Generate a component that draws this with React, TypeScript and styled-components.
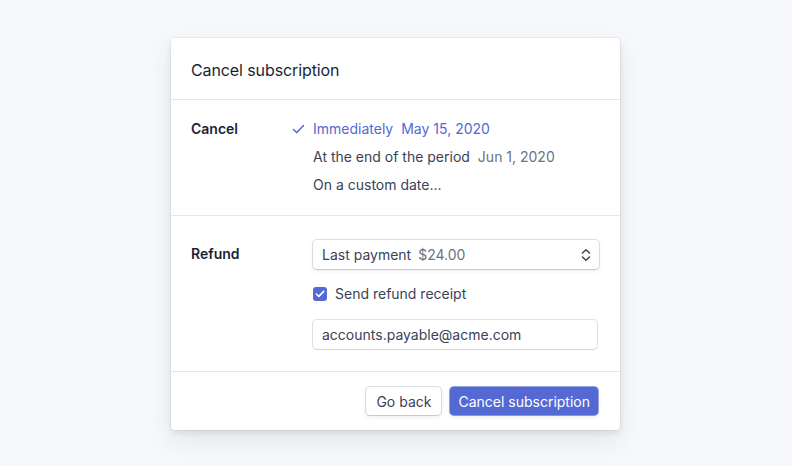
import * as React from "react";
import styled, { createGlobalStyle } from "styled-components";

const GlobalStyle = createGlobalStyle`
  html, body {
    margin: 0;
    padding: 0;
    background: #f6f8fb;
    font-family: Inter, "Noto Sans", "Liberation Sans", sans-serif;
    -webkit-font-smoothing: antialiased;
  }
`;

const Page = styled.div`
  width: 792px;
  height: 466px;
  display: flex;
  justify-content: center;
  padding-top: 38px;
  box-sizing: border-box;
`;

const Card = styled.div`
  width: 449px;
  height: 392px;
  margin-right: 1px;
  background: #fff;
  border-radius: 4px;
  box-shadow: 0 0 0 1px rgba(60, 66, 87, 0.05), 0 10px 24px 0 rgba(60, 66, 87, 0.1),
    0 3px 6px 0 rgba(0, 0, 0, 0.08);
  display: flex;
  flex-direction: column;
  overflow: hidden;
`;

const Header = styled.div`
  padding: 21px 20px 19px;
  height: 21px;
  line-height: 22px;
  font-size: 16px;
  letter-spacing: -0.1px;
  color: #1a1f36;
  border-bottom: 1px solid #e3e8ee;
`;

const Section = styled.div<{ $pad: string }>`
  display: grid;
  grid-template-columns: 122px 1fr;
  padding: ${(p) => p.$pad};
  border-bottom: 1px solid #e3e8ee;
`;

const Label = styled.div<{ $top?: number }>`
  font-size: 14px;
  font-weight: 600;
  color: #1a1f36;
  line-height: 20px;
  padding-top: ${(p) => p.$top ?? 0}px;
`;

const Options = styled.div`
  display: flex;
  flex-direction: column;
  gap: 8px;
`;

const Option = styled.div<{ $active?: boolean }>`
  position: relative;
  font-size: 14px;
  line-height: 20px;
  color: ${(p) => (p.$active ? "#5469d4" : "#3c4257")};
  display: flex;
  gap: 8px;
`;

const Sub = styled.span<{ $active?: boolean }>`
  color: ${(p) => (p.$active ? "#5469d4" : "#697386")};
`;

const CheckMark = styled.svg`
  position: absolute;
  left: -21px;
  top: 4px;
`;

const Fields = styled.div`
  display: flex;
  flex-direction: column;
`;

const Select = styled.div`
  height: 29px;
  box-sizing: border-box;
  border-radius: 4px;
  margin-right: 1px;
  box-shadow: 0 0 0 1px rgba(60, 66, 87, 0.16), 0 2px 5px 0 rgba(60, 66, 87, 0.08),
    0 1px 1px 0 rgba(0, 0, 0, 0.08);
  display: flex;
  align-items: center;
  padding: 0 8px 0 9px;
  font-size: 14px;
  color: #3c4257;
  gap: 7px;
`;

const Spacer = styled.div`
  flex: 1;
`;

const CheckRow = styled.label`
  display: flex;
  align-items: center;
  gap: 8px;
  margin-top: 15px;
  line-height: 20px;
  font-size: 14px;
  color: #3c4257;
`;

const Box = styled.span`
  width: 14px;
  height: 14px;
  border-radius: 3px;
  background: #5469d4;
  display: flex;
  align-items: center;
  justify-content: center;
`;

const Input = styled.div`
  margin: 16px 3px 0 0;
  height: 29px;
  box-sizing: border-box;
  border-radius: 4px;
  box-shadow: 0 0 0 1px rgba(60, 66, 87, 0.16), 0 1px 1px 0 rgba(0, 0, 0, 0.06);
  display: flex;
  align-items: center;
  padding: 0 9px;
  font-size: 14px;
  color: #3c4257;
`;

const Footer = styled.div`
  display: flex;
  justify-content: flex-end;
  gap: 9px;
  padding: 15px 22px 16px 20px;
`;

const Button = styled.button<{ $primary?: boolean }>`
  height: 28px;
  padding: 0 ${(p) => (p.$primary ? 8 : 10)}px;
  border: 0;
  border-radius: 4px;
  font-family: inherit;
  font-size: 14px;
  color: ${(p) => (p.$primary ? "#fff" : "#3c4257")};
  background: ${(p) => (p.$primary ? "#5469d4" : "#fff")};
  box-shadow: ${(p) =>
    p.$primary
      ? "0 0 0 1px rgba(84, 105, 212, 0.6), 0 1px 1px rgba(0,0,0,0.12), 0 2px 5px rgba(60,66,87,0.08)"
      : "0 0 0 1px rgba(60, 66, 87, 0.16), 0 2px 5px 0 rgba(60, 66, 87, 0.08), 0 1px 1px 0 rgba(0, 0, 0, 0.08)"};
`;

export default function App() {
  return (
    <>
      <GlobalStyle />
      <Page>
        <Card>
          <Header>Cancel subscription</Header>
          <Section $pad="19px 20px 20px">
            <Label>Cancel</Label>
            <Options>
              <Option $active>
                <CheckMark width="13" height="12" viewBox="0 0 13 12">
                  <path d="M1.5 6.5 L4.8 9.6 L11.5 2.5" fill="none" stroke="#5469d4" strokeWidth="1.5" strokeLinecap="round" strokeLinejoin="round" />
                </CheckMark>
                Immediately <Sub $active>May 15, 2020</Sub>
              </Option>
              <Option>
                At the end of the period <Sub>Jun 1, 2020</Sub>
              </Option>
              <Option>On a custom date...</Option>
            </Options>
          </Section>
          <Section $pad="24px 20px 22px">
            <Label $top={4}>Refund</Label>
            <Fields>
              <Select>
                Last payment <Sub>$24.00</Sub>
                <Spacer />
                <svg width="10" height="14" viewBox="0 0 10 14">
                  <path d="M1.5 5 L5 1.8 L8.5 5 M1.5 9 L5 12.2 L8.5 9" fill="none" stroke="#3c4257" strokeWidth="1.5" strokeLinecap="round" strokeLinejoin="round" />
                </svg>
              </Select>
              <CheckRow>
                <Box>
                  <svg width="10" height="8" viewBox="0 0 10 8">
                    <path d="M1.3 4 L3.8 6.4 L8.7 1.4" fill="none" stroke="#fff" strokeWidth="1.6" strokeLinecap="round" strokeLinejoin="round" />
                  </svg>
                </Box>
                Send refund receipt
              </CheckRow>
              <Input>accounts.payable@acme.com</Input>
            </Fields>
          </Section>
          <Footer>
            <Button>Go back</Button>
            <Button $primary>Cancel subscription</Button>
          </Footer>
        </Card>
      </Page>
    </>
  );
}
